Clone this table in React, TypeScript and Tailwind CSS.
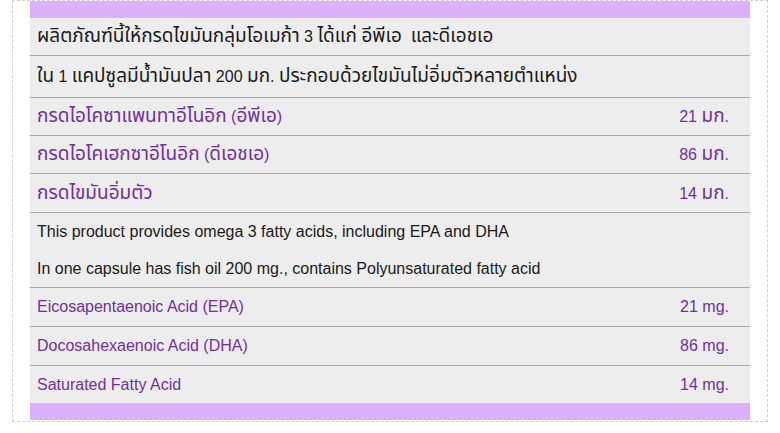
import React from 'react'

interface NutrientRow {
  label: string
  value: string
  h: string
}

const thaiRows: NutrientRow[] = [
  { label: 'กรดไอโคซาแพนทาอีโนอิก (อีพีเอ)', value: '21 มก.', h: 'h-[38px] border-b' },
  { label: 'กรดไอโคเฮกซาอีโนอิก (ดีเอชเอ)', value: '86 มก.', h: 'h-[38px] border-b' },
  { label: 'กรดไขมันอิ่มตัว', value: '14 มก.', h: 'h-[39px] border-b' },
]

const engRows: NutrientRow[] = [
  { label: 'Eicosapentaenoic Acid (EPA)', value: '21 mg.', h: 'h-[39px] border-b' },
  { label: 'Docosahexaenoic Acid (DHA)', value: '86 mg.', h: 'h-[39px] border-b' },
  { label: 'Saturated Fatty Acid', value: '14 mg.', h: 'h-[37px]' },
]

// the Thai fallback face runs small, so Thai runs get a bigger size
function Th({ text }: { text: string }) {
  const parts = text.split(/([\u0E00-\u0E7F]+)/)
  return (
    <>
      {parts.map((p, i) =>
        /[\u0E00-\u0E7F]/.test(p) ? (
          <span key={i} className="text-[19px]">{p}</span>
        ) : (
          <span key={i} className="whitespace-pre">{p}</span>
        )
      )}
    </>
  )
}

function ValueRow({ row }: { row: NutrientRow }) {
  return (
    <div className={`flex items-center justify-between pl-[7px] pr-[21px] border-[#a8a8a8] text-[#7030a0] ${row.h}`}>
      <span><Th text={row.label} /></span>
      <span><Th text={row.value} /></span>
    </div>
  )
}

export default function App() {
  return (
    <div className="w-[780px] h-[433px] bg-white" style={{ fontFamily: '"Liberation Sans", Tahoma, "Noto Sans Thai", sans-serif' }}>
      <div className="ml-[12px] w-[756px] h-[422px] border border-dashed border-[#d0d0d0] px-[17px]">
        <div className="w-[720px] text-[16px] leading-[20px] text-[#1a1a1a] bg-[#ededed]">
          {/* top bar */}
          <div className="h-[17px] bg-[#dcb0fc]"></div>

          <div className="h-[38px] flex items-center pl-[7px] border-b border-[#a8a8a8]">
            <span><Th text="ผลิตภัณฑ์นี้ให้กรดไขมันกลุ่มโอเมก้า 3 ได้แก่ อีพีเอ  และดีเอชเอ" /></span>
          </div>
          <div className="h-[42px] flex items-center pl-[7px] border-b border-[#a8a8a8]">
            <span><Th text="ใน 1 แคปซูลมีน้ำมันปลา 200 มก. ประกอบด้วยไขมันไม่อิ่มตัวหลายตำแหน่ง" /></span>
          </div>

          {thaiRows.map((r) => (
            <ValueRow key={r.label} row={r} />
          ))}

          <div className="h-[75px] border-b border-[#a8a8a8] pl-[7px] flex flex-col">
            <div className="h-[37px] flex items-center">This product provides omega 3 fatty acids, including EPA and DHA</div>
            <div className="h-[37px] flex items-center">In one capsule has fish oil 200 mg., contains Polyunsaturated fatty acid</div>
          </div>

          {engRows.map((r) => (
            <ValueRow key={r.label} row={r} />
          ))}

          {/* bottom bar */}
          <div className="h-[17px] bg-[#dcb0fc]"></div>
        </div>
      </div>
    </div>
  )
}
